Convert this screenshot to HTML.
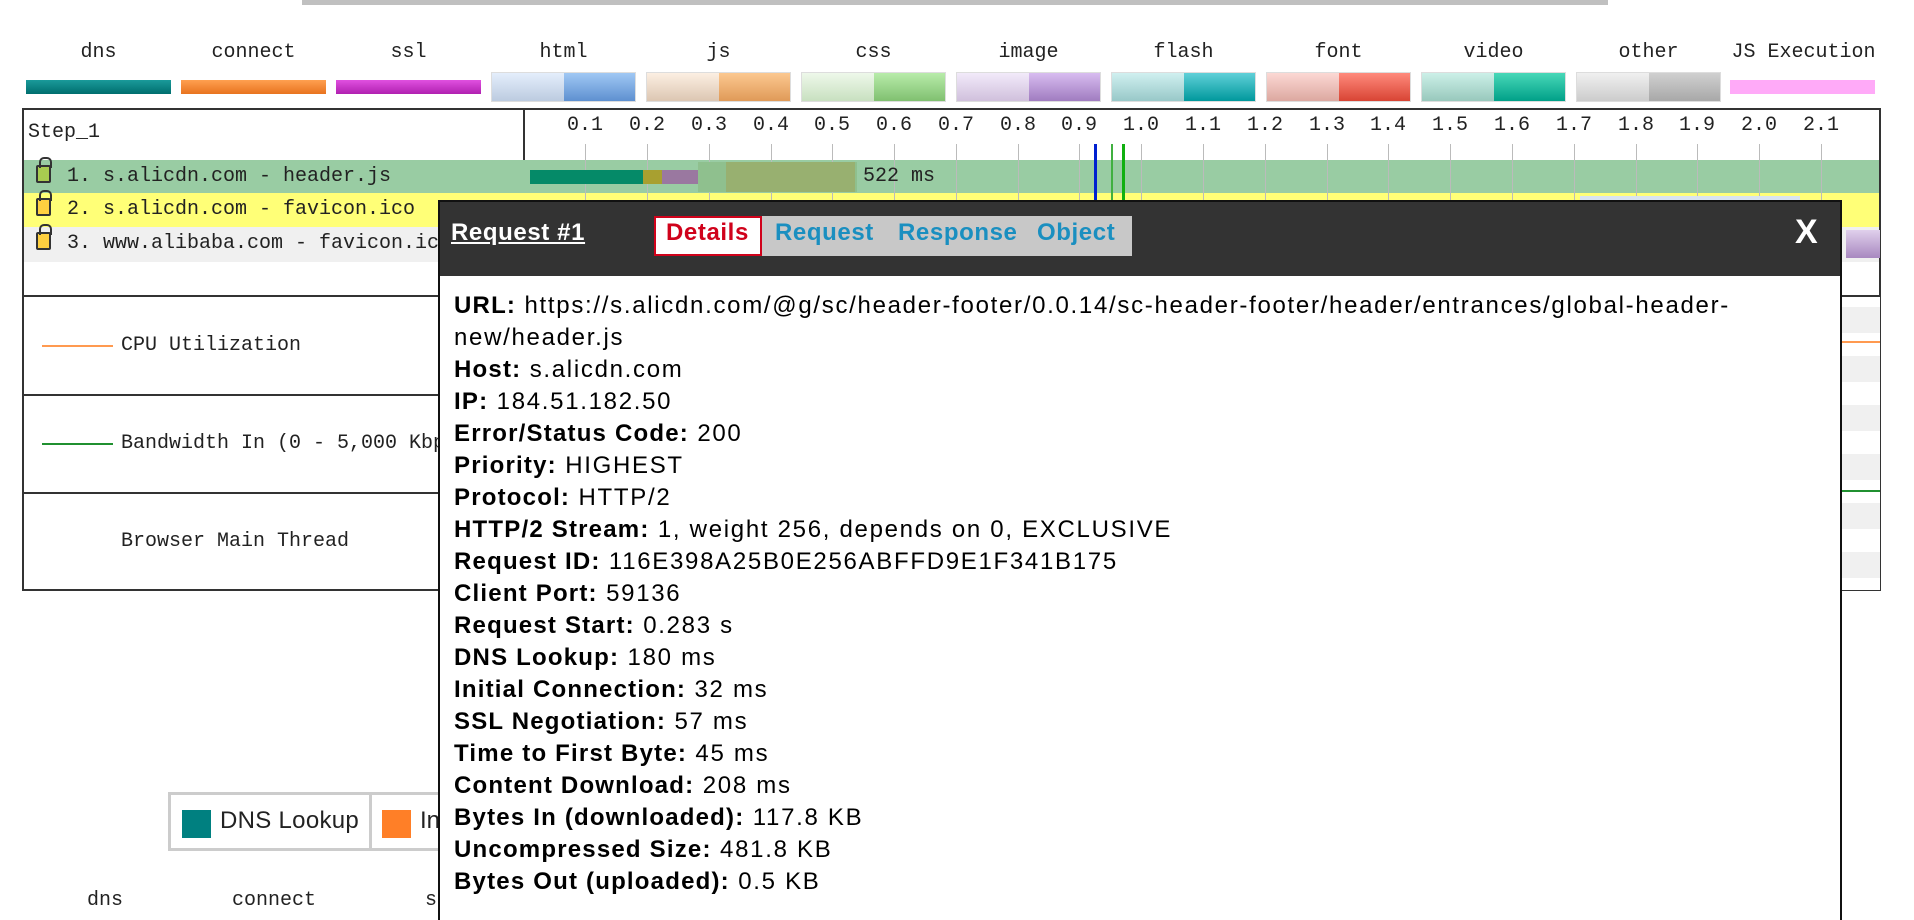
<!DOCTYPE html>
<html><head><meta charset="utf-8">
<style>
*{margin:0;padding:0;box-sizing:border-box}
html{width:1914px;height:920px;overflow:hidden}
body{width:1914px;height:920px;overflow:hidden;background:#fff;position:relative;font-family:"Liberation Mono",monospace;color:#222}
.a{position:absolute}
.lbl{position:absolute;top:41px;font-size:20px;width:145px;text-align:center;color:#222}
.bar{position:absolute;top:80px;height:14px;width:145px}
.bar2{position:absolute;top:72px;height:30px;width:145px;border:1px solid #ddd}
.bar2 span{position:absolute;top:0;bottom:0;left:50%;right:0}
.tick{position:absolute;top:144px;height:118px;width:1px;background:#bbb}
.sc{position:absolute;top:114px;font-size:20px;width:50px;text-align:center}
.row{position:absolute;left:24px;height:34px;font-size:20px;line-height:34px;white-space:nowrap}
.lock{display:inline-block;width:15px;height:18px;border:2px solid #333;border-radius:2px;vertical-align:-2px;margin:0 16px 0 12px;position:relative}
.lock:before{content:"";position:absolute;left:1px;top:-10px;width:9px;height:9px;border:2px solid #333;border-bottom:none;border-radius:5px 5px 0 0}
.pd{font-family:"Liberation Sans",sans-serif;font-size:24px;letter-spacing:1.7px;line-height:32px;color:#000;white-space:nowrap}
.pd b{font-weight:bold;letter-spacing:1.2px}
.tab{position:absolute;top:219px;font-family:'Liberation Sans',sans-serif;font-weight:bold;font-size:24px;letter-spacing:0.6px;color:#1a8fc0}
</style></head><body>
<div class="a" style="left:302px;top:0;width:1306px;height:5px;background:#c0c0c0"></div>

<div class="lbl" style="left:26px">dns</div>
<div class="lbl" style="left:181px">connect</div>
<div class="lbl" style="left:336px">ssl</div>
<div class="lbl" style="left:491px">html</div>
<div class="lbl" style="left:646px">js</div>
<div class="lbl" style="left:801px">css</div>
<div class="lbl" style="left:956px">image</div>
<div class="lbl" style="left:1111px">flash</div>
<div class="lbl" style="left:1266px">font</div>
<div class="lbl" style="left:1421px">video</div>
<div class="lbl" style="left:1576px">other</div>
<div class="lbl" style="left:1726px;width:155px">JS Execution</div>

<div class="bar" style="left:26px;background:linear-gradient(#1a9a9a,#006e6e)"></div>
<div class="bar" style="left:181px;background:linear-gradient(#ffa050,#e8731f)"></div>
<div class="bar" style="left:336px;background:linear-gradient(#e050e0,#b020b0)"></div>
<div class="bar2" style="left:491px;background:linear-gradient(#e4eefc,#bccbe0)"><span style="background:linear-gradient(#a0c8f4,#5e90d0)"></span></div>
<div class="bar2" style="left:646px;background:linear-gradient(#fcefe2,#dcc6b2)"><span style="background:linear-gradient(#fcc890,#e09a58)"></span></div>
<div class="bar2" style="left:801px;background:linear-gradient(#eef8ea,#c8e0c0)"><span style="background:linear-gradient(#b8ecaa,#80c070)"></span></div>
<div class="bar2" style="left:956px;background:linear-gradient(#f2eafa,#d0c0dc)"><span style="background:linear-gradient(#d8bcf0,#a07cc0)"></span></div>
<div class="bar2" style="left:1111px;background:linear-gradient(#d0f0f0,#98c8c8)"><span style="background:linear-gradient(#60d0d8,#00989c)"></span></div>
<div class="bar2" style="left:1266px;background:linear-gradient(#fcd8d4,#dca8a0)"><span style="background:linear-gradient(#ff8a7c,#d84434)"></span></div>
<div class="bar2" style="left:1421px;background:linear-gradient(#ccf0e8,#98c8bc)"><span style="background:linear-gradient(#48d8b8,#00a088)"></span></div>
<div class="bar2" style="left:1576px;background:linear-gradient(#f0f0f0,#cccccc)"><span style="background:linear-gradient(#d0d0d0,#a8a8a8)"></span></div>
<div class="bar" style="left:1730px;background:#ffaaf8"></div>

<div class="a" style="left:22px;top:108px;width:1859px;height:483px;border:2px solid #333"></div>
<div class="a" style="left:523px;top:109px;width:2px;height:187px;background:#333"></div>
<div class="a" style="left:28px;top:121px;font-size:20px">Step_1</div>

<div class="a" style="left:24px;top:160px;width:1855px;height:33px;background:#99cca3"></div>
<div class="a" style="left:24px;top:193px;width:1855px;height:34px;background:#ffff77"></div>
<div class="a" style="left:24px;top:227px;width:1855px;height:35px;background:#f0f0f0"></div>

<div class="tick" style="left:585px"></div><div class="tick" style="left:647px"></div><div class="tick" style="left:709px"></div><div class="tick" style="left:771px"></div><div class="tick" style="left:832px"></div><div class="tick" style="left:894px"></div><div class="tick" style="left:956px"></div><div class="tick" style="left:1018px"></div><div class="tick" style="left:1079px"></div><div class="tick" style="left:1141px"></div><div class="tick" style="left:1203px"></div><div class="tick" style="left:1265px"></div><div class="tick" style="left:1327px"></div><div class="tick" style="left:1388px"></div><div class="tick" style="left:1450px"></div><div class="tick" style="left:1512px"></div><div class="tick" style="left:1574px"></div><div class="tick" style="left:1636px"></div><div class="tick" style="left:1697px"></div><div class="tick" style="left:1759px"></div><div class="tick" style="left:1821px"></div>

<div class="sc" style="left:560px">0.1</div><div class="sc" style="left:622px">0.2</div><div class="sc" style="left:684px">0.3</div><div class="sc" style="left:746px">0.4</div><div class="sc" style="left:807px">0.5</div><div class="sc" style="left:869px">0.6</div><div class="sc" style="left:931px">0.7</div><div class="sc" style="left:993px">0.8</div><div class="sc" style="left:1054px">0.9</div><div class="sc" style="left:1116px">1.0</div><div class="sc" style="left:1178px">1.1</div><div class="sc" style="left:1240px">1.2</div><div class="sc" style="left:1302px">1.3</div><div class="sc" style="left:1363px">1.4</div><div class="sc" style="left:1425px">1.5</div><div class="sc" style="left:1487px">1.6</div><div class="sc" style="left:1549px">1.7</div><div class="sc" style="left:1611px">1.8</div><div class="sc" style="left:1672px">1.9</div><div class="sc" style="left:1734px">2.0</div><div class="sc" style="left:1796px">2.1</div>

<div class="a" style="left:1094px;top:144px;width:3px;height:120px;background:#0020d0"></div>
<div class="a" style="left:1111px;top:144px;width:2px;height:120px;background:#40b040"></div>
<div class="a" style="left:1122px;top:144px;width:3px;height:120px;background:#10b010"></div>

<div class="row" style="top:160px"><span class="lock" style="background:#a8cc50"></span>1. s.alicdn.com - header.js</div>
<div class="row" style="top:193px"><span class="lock" style="background:#ffd040"></span>2. s.alicdn.com - favicon.ico</div>
<div class="row" style="top:227px"><span class="lock" style="background:#ffd040"></span>3. www.alibaba.com - favicon.ico</div>

<div class="a" style="left:530px;top:170px;width:113px;height:14px;background:#058a68"></div>
<div class="a" style="left:643px;top:170px;width:19px;height:14px;background:#a8a030"></div>
<div class="a" style="left:662px;top:170px;width:36px;height:14px;background:#9a78a0"></div>
<div class="a" style="left:698px;top:162px;width:159px;height:30px;background:#8fc08e"></div>
<div class="a" style="left:726px;top:162px;width:129px;height:30px;background:#98b070"></div>
<div class="a" style="left:863px;top:161px;font-size:20px;line-height:32px">522 ms</div>
<div class="a" style="left:1580px;top:196px;width:220px;height:5px;background:#d8e4f0"></div>
<div class="a" style="left:1846px;top:230px;width:34px;height:28px;background:linear-gradient(#e0d0ec,#a888c0)"></div>

<div class="a" style="left:22px;top:295px;width:1859px;height:2px;background:#333"></div>
<div class="a" style="left:22px;top:394px;width:1859px;height:2px;background:#333"></div>
<div class="a" style="left:22px;top:492px;width:1859px;height:2px;background:#333"></div>
<div class="a" style="left:1842px;top:297px;width:38px;height:293px;background:repeating-linear-gradient(#fff 0 10px,#f0f0f0 10px 36px,#fff 36px 49px)"></div>
<div class="a" style="left:1842px;top:341px;width:38px;height:2px;background:#ff9a50"></div>
<div class="a" style="left:1842px;top:490px;width:38px;height:2px;background:#209030"></div>
<div class="a" style="left:42px;top:345px;width:71px;height:2px;background:#ff9a50"></div>
<div class="a" style="left:121px;top:334px;font-size:20px">CPU Utilization</div>
<div class="a" style="left:42px;top:443px;width:71px;height:2px;background:#209030"></div>
<div class="a" style="left:121px;top:432px;font-size:20px;white-space:nowrap">Bandwidth In (0 - 5,000 Kbps)</div>
<div class="a" style="left:121px;top:530px;font-size:20px">Browser Main Thread</div>

<div class="a" style="left:168px;top:792px;width:400px;height:59px;border:3px solid #ccc;border-right:none"></div>
<div class="a" style="left:369px;top:795px;width:3px;height:53px;background:#ccc"></div>
<div class="a" style="left:182px;top:810px;width:29px;height:28px;background:#008080"></div>
<div class="a" style="left:220px;top:807px;font-family:'Liberation Sans',sans-serif;font-size:24px;letter-spacing:0.3px">DNS Lookup</div>
<div class="a" style="left:382px;top:810px;width:29px;height:28px;background:#ff7f27"></div>
<div class="a" style="left:420px;top:807px;font-family:'Liberation Sans',sans-serif;font-size:24px">In</div>
<div class="a" style="left:70px;top:889px;font-size:20px;width:70px;text-align:center">dns</div>
<div class="a" style="left:232px;top:889px;font-size:20px;width:80px;text-align:center">connect</div>
<div class="a" style="left:425px;top:889px;font-size:20px">s</div>

<div class="a" style="left:438px;top:200px;width:1404px;height:720px;background:#fff;border:2px solid #111;border-bottom:none"></div>
<div class="a" style="left:440px;top:202px;width:1400px;height:74px;background:#333"></div>
<div class="a" style="left:451px;top:219px;font-family:'Liberation Sans',sans-serif;font-weight:bold;font-size:24px;letter-spacing:0.6px;color:#fff;text-decoration:underline">Request #1</div>
<div class="a" style="left:654px;top:216px;width:478px;height:40px;background:#c8c8c8"></div>
<div class="a" style="left:654px;top:216px;width:108px;height:40px;background:#fff;border:2px solid #d0021b"></div>
<div class="tab" style="left:666px;color:#d0021b">Details</div>
<div class="tab" style="left:775px">Request</div>
<div class="tab" style="left:898px">Response</div>
<div class="tab" style="left:1037px">Object</div>
<div class="a" style="left:1795px;top:213px;font-family:'Liberation Sans',sans-serif;font-weight:bold;font-size:34px;color:#fff">X</div>

<div class="a pd" style="left:454px;top:290px">
<b>URL:</b> https://s.alicdn.com/@g/sc/header-footer/0.0.14/sc-header-footer/header/entrances/global-header-<br>new/header.js<br>
<b>Host:</b> s.alicdn.com<br>
<b>IP:</b> 184.51.182.50<br>
<b>Error/Status Code:</b> 200<br>
<b>Priority:</b> HIGHEST<br>
<b>Protocol:</b> HTTP/2<br>
<b>HTTP/2 Stream:</b> 1, weight 256, depends on 0, EXCLUSIVE<br>
<b>Request ID:</b> 116E398A25B0E256ABFFD9E1F341B175<br>
<b>Client Port:</b> 59136<br>
<b>Request Start:</b> 0.283 s<br>
<b>DNS Lookup:</b> 180 ms<br>
<b>Initial Connection:</b> 32 ms<br>
<b>SSL Negotiation:</b> 57 ms<br>
<b>Time to First Byte:</b> 45 ms<br>
<b>Content Download:</b> 208 ms<br>
<b>Bytes In (downloaded):</b> 117.8 KB<br>
<b>Uncompressed Size:</b> 481.8 KB<br>
<b>Bytes Out (uploaded):</b> 0.5 KB
</div>
</body></html>
